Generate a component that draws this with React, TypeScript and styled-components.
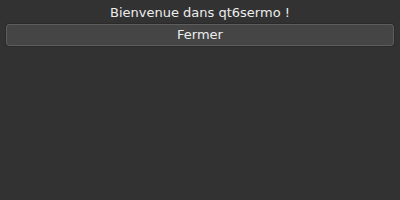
import React from "react";
import styled, { createGlobalStyle } from "styled-components";

const Global = createGlobalStyle`
  html, body { margin: 0; padding: 0; background: #323232; }
  body { font-family: "DejaVu Sans", "Liberation Sans", sans-serif; }
`;

const Window = styled.div`
  width: 400px;
  height: 200px;
  background: #323232;
  display: flex;
  flex-direction: column;
  align-items: stretch;
  padding: 4px 6px;
  box-sizing: border-box;
  gap: 3px;
`;

const Title = styled.div`
  color: #ededed;
  font-size: 13px;
  line-height: 17px;
  text-align: center;
`;

const Button = styled.button`
  height: 22px;
  margin: 0;
  padding: 0;
  border: 1px solid #5d5d5d;
  border-radius: 3px;
  background: #454545;
  color: #ededed;
  font-family: "DejaVu Sans", "Liberation Sans", sans-serif;
  font-size: 13px;
  line-height: 20px;
  box-shadow: 0 0 0 1px #2a2a2a;
`;

export default function App() {
  return (
    <>
      <Global />
      <Window>
        <Title>Bienvenue dans qt6sermo !</Title>
        <Button>Fermer</Button>
      </Window>
    </>
  );
}
